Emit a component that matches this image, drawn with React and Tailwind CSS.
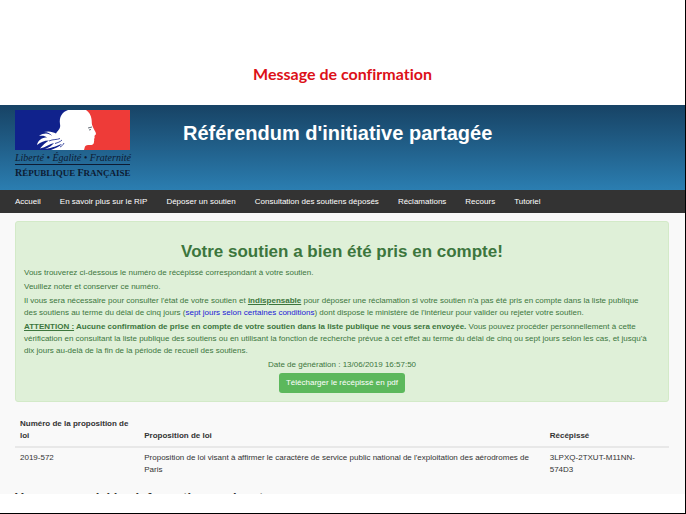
const navLinks = [
  'Accueil',
  'En savoir plus sur le RIP',
  'Déposer un soutien',
  'Consultation des soutiens déposés',
  'Réclamations',
  'Recours',
  'Tutoriel',
]

function Logo() {
  return (
    <a href="#accueil" className="block w-[115px] shrink-0 text-[#0d1b33]">
      <svg viewBox="0 0 115 40" className="block h-10 w-[115px]" aria-hidden="true">
        <rect width="55" height="40" fill="#10228c" />
        <rect x="55" width="60" height="40" fill="#ee3b38" />
        {/* Profil de Marianne */}
        <path
          fill="#fff"
          d="M53 0 L71 0 C74 2 76 5 76.500 9 C77 12 76.500 14 77.500 16 C78.500 19 81 22 81 24 C81 25 79.500 25 79.500 26 C79.500 27 80 28 79 29 C79.500 30 79 31 79 32 C79 34.500 77 35 75 35 C72 35 71 35 70 36.500 L69 40 L36 40 C40 38.500 44 37 47 34 C42 35.500 38 38 30 39 C34 37.500 37 35.500 39 33 C35 34 31 37 25 38.500 C28 35 31 32 34 30.500 C29 30.500 26 32 22 35 C23 30 27 27.500 32 27.500 C30 25.500 27 25.500 24 26 C29 22.500 34 23 37 26 C36 24 33 22 29 22 C34 20.500 38 22 41 23.500 C43 20 46 19 45 14 C44 7 47 2 53 0 Z"
        />
        <path
          fill="none"
          stroke="#10228c"
          strokeWidth="0.8"
          d="M34 31 C38 29 42 30 45 28.500 M40 33.500 C43 32.500 45 32 47 30 M45 37 C47 36 48 35 49 33"
        />
        <path fill="none" stroke="#67707a" strokeWidth="1" d="M73 18 L77 17 M74 20 L76 19.500" />
      </svg>
      <span className="block pt-[3px] font-['Liberation_Serif',serif] text-[10px] leading-[10px] whitespace-nowrap italic">
        Liberté • Égalité • Fraternité
      </span>
      <span className="mt-px block border-t border-[#0d1b33] pt-[2px] font-['Liberation_Serif',serif] text-[9px] leading-[12px] font-bold whitespace-nowrap">
        <span className="text-[10px]">R</span>ÉPUBLIQUE <span className="text-[10px]">F</span>RANÇAISE
      </span>
    </a>
  )
}

export default function App() {
  return (
    <div className="min-h-screen border-r border-b border-black bg-white font-['Liberation_Sans',sans-serif] text-[8px] leading-[12px] text-[#333]">
      <p className="pt-[62px] pb-[19px] text-center font-[Lato,sans-serif] text-[16px] leading-6 font-bold text-[#dc1018] [font-variant-ligatures:none]">
        Message de confirmation
      </p>

      <header className="flex h-[85px] items-start bg-linear-to-b from-[#174365] to-[#2b7eb1] px-[15px] pt-[5px]">
        <Logo />
        <h1 className="ml-[53px] pt-2 text-[20px] leading-[30px] font-bold whitespace-nowrap text-white">
          Référendum d'initiative partagée
        </h1>
      </header>

      <nav className="flex h-[23px] items-center gap-[19px] bg-[#333] px-[15px] whitespace-nowrap text-white">
        {navLinks.map((label) => (
          <a key={label} href="#">
            {label}
          </a>
        ))}
      </nav>

      {/* Zone de contenu : le titre suivant dépasse sous le bord */}
      <main className="h-[281px] overflow-hidden bg-[#f9f9f9] pt-[8px] pr-[16px] pl-[15px]">
        <section className="rounded-[3px] border border-[#d3eac8] bg-[#dff0d8] px-[8px] pt-[18px] pb-[8px] text-[#3c763d]">
          <h2 className="mb-[3px] text-center text-[17px] leading-6 font-bold">
            Votre soutien a bien été pris en compte!
          </h2>
          <p className="mb-[2px]">
            Vous trouverez ci-dessous le numéro de récépissé correspondant à votre soutien.
          </p>
          <p className="mb-[2px]">Veuillez noter et conserver ce numéro.</p>
          <p className="mb-[2px] whitespace-nowrap">
            Il vous sera nécessaire pour consulter l'état de votre soutien et{' '}
            <strong className="underline">indispensable</strong> pour déposer une réclamation si votre
            soutien n'a pas été pris en compte dans la liste publique
            <br />
            des soutiens au terme du délai de cinq jours (
            <a href="#conditions" className="text-[#1a1ad6]">
              sept jours selon certaines conditions
            </a>
            ) dont dispose le ministère de l'intérieur pour valider ou rejeter votre soutien.
          </p>
          <p className="mb-[2px] whitespace-nowrap">
            <strong>
              <span className="underline">ATTENTION :</span> Aucune confirmation de prise en compte de
              votre soutien dans la liste publique ne vous sera envoyée.
            </strong>{' '}
            Vous pouvez procéder personnellement à cette
            <br />
            vérification en consultant la liste publique des soutiens ou en utilisant la fonction de
            recherche prévue à cet effet au terme du délai de cinq ou sept jours selon les cas, et
            jusqu'à
            <br />
            dix jours au-delà de la fin de la période de recueil des soutiens.
          </p>
          <div className="flex flex-col items-center gap-[2px]">
            <p>Date de génération : 13/06/2019 16:57:50</p>
            <button
              type="button"
              className="h-5 rounded-[3px] bg-[#5cb85c] px-[7px] whitespace-nowrap text-white"
            >
              Télécharger le récépissé en pdf
            </button>
          </div>
        </section>

        <table className="mt-[13px] w-full table-fixed text-left">
          <thead className="border-b-2 border-[#e8e8e8]">
            <tr className="align-bottom">
              <th className="w-[19%] px-[5px] pt-[3px] pb-[4px]">
                Numéro de la proposition de
                <br />
                loi
              </th>
              <th className="w-[62%] px-[5px] pt-[3px] pb-[4px]">Proposition de loi</th>
              <th className="px-[5px] pt-[3px] pb-[4px]">Récépissé</th>
            </tr>
          </thead>
          <tbody>
            <tr className="align-top">
              <td className="px-[5px] py-[4px]">2019-572</td>
              <td className="px-[5px] py-[4px] whitespace-nowrap">
                Proposition de loi visant à affirmer le caractère de service public national de
                l'exploitation des aérodromes de
                <br />
                Paris
              </td>
              <td className="px-[5px] py-[4px]">
                3LPXQ-2TXUT-M11NN-
                <br />
                574D3
              </td>
            </tr>
          </tbody>
        </table>

        <h2 className="mt-[8px] text-[13px] leading-5 font-bold">
          Vous avez saisi les informations suivantes
        </h2>
      </main>
    </div>
  )
}
